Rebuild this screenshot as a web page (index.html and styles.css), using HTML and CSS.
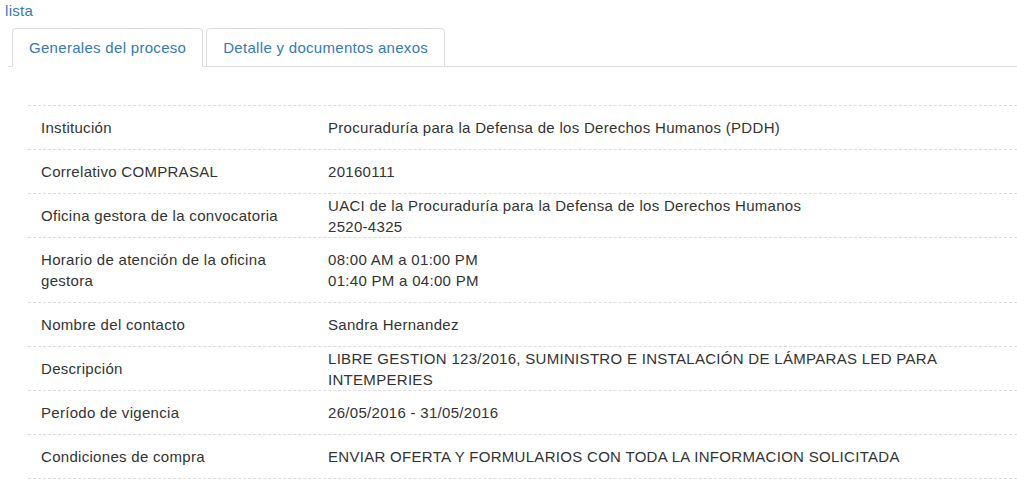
FILE: index.html
```html
<!DOCTYPE html>
<html lang="es">
<head>
<meta charset="utf-8">
<title>Generales del proceso</title>
<link rel="stylesheet" href="styles.css">
</head>
<body>
<div class="page">
  <a class="back-link" href="#">lista</a>
  <ul class="tabs">
    <li class="tab active"><a href="#">Generales del proceso</a></li>
    <li class="tab"><a href="#">Detalle y documentos anexos</a></li>
  </ul>
  <div class="tab-content">
    <div class="details">
      <div class="row"><div class="label">Institución</div><div class="value">Procuraduría para la Defensa de los Derechos Humanos (PDDH)</div></div>
      <div class="row"><div class="label">Correlativo COMPRASAL</div><div class="value">20160111</div></div>
      <div class="row"><div class="label">Oficina gestora de la convocatoria</div><div class="value">UACI de la Procuraduría para la Defensa de los Derechos Humanos<br>2520-4325</div></div>
      <div class="row"><div class="label">Horario de atención de la oficina gestora</div><div class="value">08:00 AM a 01:00 PM<br>01:40 PM a 04:00 PM</div></div>
      <div class="row"><div class="label">Nombre del contacto</div><div class="value">Sandra Hernandez</div></div>
      <div class="row"><div class="label">Descripción</div><div class="value">LIBRE GESTION 123/2016, SUMINISTRO E INSTALACIÓN DE LÁMPARAS LED PARA INTEMPERIES</div></div>
      <div class="row"><div class="label">Período de vigencia</div><div class="value">26/05/2016 - 31/05/2016</div></div>
      <div class="row"><div class="label">Condiciones de compra</div><div class="value">ENVIAR OFERTA Y FORMULARIOS CON TODA LA INFORMACION SOLICITADA</div></div>
    </div>
  </div>
</div>
</body>
</html>
```

FILE: styles.css
```css
html, body {
  margin: 0;
  padding: 0;
  background: #fff;
}

body {
  font-family: "Liberation Sans", Arial, sans-serif;
  font-size: 15px;
  line-height: 21px;
  letter-spacing: 0.3px;
  color: #333;
}

.page {
  padding: 0 0 0 5px;
}

a {
  color: #3579b9;
  text-decoration: none;
}

.back-link {
  display: block;
}

.tabs {
  list-style: none;
  margin: 7px 0 0 3px;
  padding: 0 0 0 4px;
  display: flex;
  border-bottom: 1px solid #ddd;
}

.tab {
  margin: 0 3px -1px 0;
}

.tab a {
  display: block;
  padding: 8px 16px;
  border: 1px solid #ddd;
  border-radius: 4px 4px 0 0;
  background: #fff;
}

.tab.active a {
  border-bottom-color: #fff;
}

.tab-content {
  padding: 38px 0 0 23px;
}

.details {
  border-bottom: 1px dashed #ddd;
}

.row {
  display: grid;
  grid-template-columns: 287px 1fr;
  align-items: center;
  border-top: 1px dashed #ddd;
}

.label {
  padding: 11px 13px;
}

.value {
  padding: 0 13px;
}
```
